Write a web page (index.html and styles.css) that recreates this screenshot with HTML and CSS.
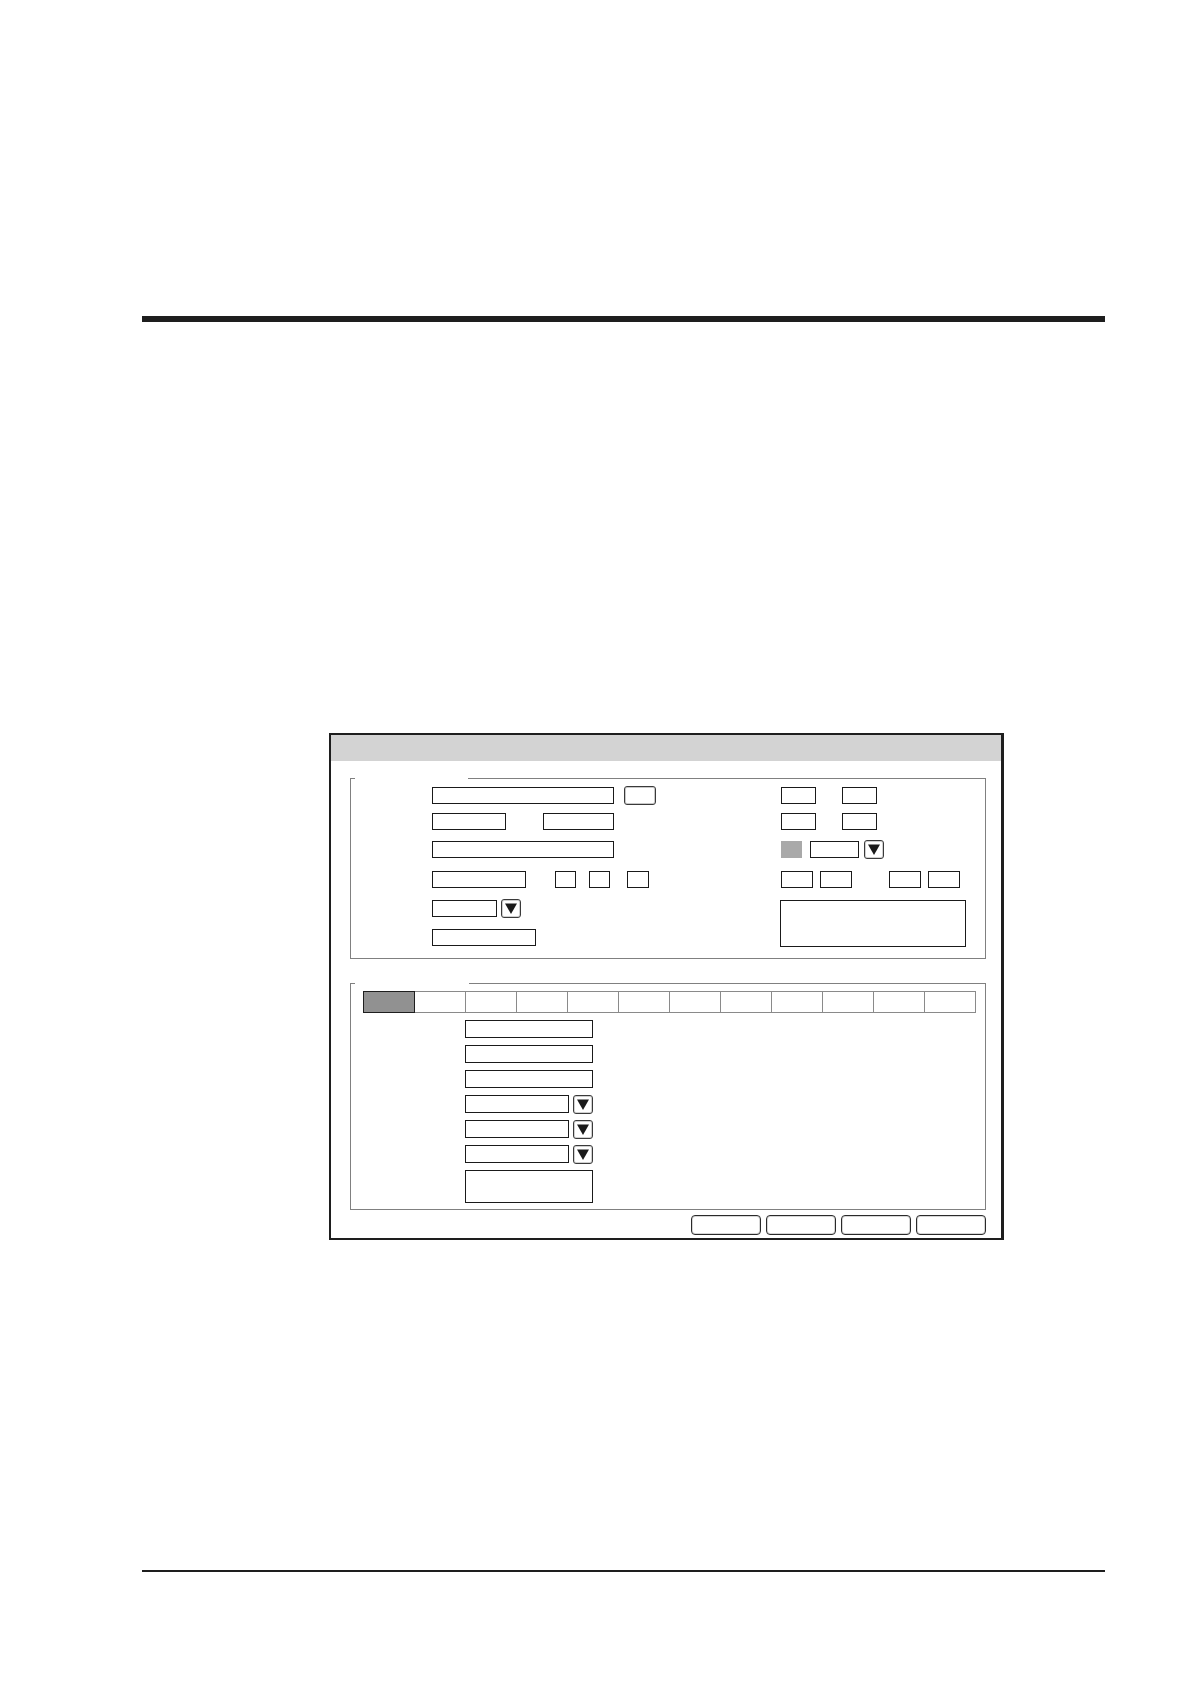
FILE: index.html
```html
<!DOCTYPE html>
<html lang="en">
<head>
<meta charset="utf-8">
<title>Dialog</title>
<link rel="stylesheet" href="styles.css">
</head>
<body>
<div class="page">
  <div class="rule-top"></div>

  <div class="window">
    <div class="titlebar"></div>
    <div class="content">

      <div class="group group-info">
        <div class="group-top"><span class="tick"></span><span class="legend"></span><span class="line"></span></div>
        <div class="info-grid">
          <div class="cell"><span class="field w182"></span><span class="btn-small ml10"></span></div>
          <div class="cell"><span class="field w35"></span><span class="field w35 ml26"></span></div>

          <div class="cell"><span class="field w74"></span><span class="field w71 ml37"></span></div>
          <div class="cell"><span class="field w35"></span><span class="field w35 ml26"></span></div>

          <div class="cell"><span class="field w182"></span></div>
          <div class="cell"><span class="swatch"></span><span class="field w49 ml8"></span><span class="dd ml5"><svg viewBox="0 0 20 19" width="20" height="19"><path d="M4 4.5 L16 4.5 L10 15 Z" fill="#1a1a1a"/></svg></span></div>

          <div class="cell"><span class="field w94"></span><span class="field w21 ml29"></span><span class="field w21 ml13"></span><span class="field w22 ml17"></span></div>
          <div class="cell"><span class="field w32"></span><span class="field w32 ml7"></span><span class="field w32 ml37"></span><span class="field w32 ml7"></span></div>

          <div class="cell"><span class="field w65"></span><span class="dd ml4"><svg viewBox="0 0 20 19" width="20" height="19"><path d="M4 4.5 L16 4.5 L10 15 Z" fill="#1a1a1a"/></svg></span></div>
          <div class="cell cell-memo"><span class="memo"></span></div>

          <div class="cell"><span class="field w104"></span></div>
        </div>
      </div>

      <div class="group group-detail">
        <div class="group-top"><span class="tick"></span><span class="legend"></span><span class="line"></span></div>
        <div class="detail-body">
          <div class="tabs">
            <span class="tab active"></span><span class="tab"></span><span class="tab"></span><span class="tab"></span>
            <span class="tab"></span><span class="tab"></span><span class="tab"></span><span class="tab"></span>
            <span class="tab"></span><span class="tab"></span><span class="tab"></span><span class="tab"></span>
          </div>
          <div class="detail-fields">
            <div class="drow"><span class="field tall w128"></span></div>
            <div class="drow"><span class="field tall w128"></span></div>
            <div class="drow"><span class="field tall w128"></span></div>
            <div class="drow"><span class="field tall w104"></span><span class="dd ml4"><svg viewBox="0 0 20 19" width="20" height="19"><path d="M4 4.5 L16 4.5 L10 15 Z" fill="#1a1a1a"/></svg></span></div>
            <div class="drow"><span class="field tall w104"></span><span class="dd ml4"><svg viewBox="0 0 20 19" width="20" height="19"><path d="M4 4.5 L16 4.5 L10 15 Z" fill="#1a1a1a"/></svg></span></div>
            <div class="drow"><span class="field tall w104"></span><span class="dd ml4"><svg viewBox="0 0 20 19" width="20" height="19"><path d="M4 4.5 L16 4.5 L10 15 Z" fill="#1a1a1a"/></svg></span></div>
            <div class="drow drow-notes"><span class="field notes w128"></span></div>
          </div>
        </div>
      </div>

      <div class="buttons">
        <span class="btn"></span><span class="btn"></span><span class="btn"></span><span class="btn"></span>
      </div>

    </div>
  </div>

  <div class="rule-bottom"></div>
</div>
</body>
</html>
```

FILE: styles.css
```css
* { box-sizing: border-box; }

html, body {
  margin: 0;
  padding: 0;
  background: #ffffff;
  font-family: "Liberation Sans", Arial, sans-serif;
}

.page {
  padding-top: 316px;
  padding-left: 142px;
}

.rule-top {
  width: 963px;
  height: 6px;
  background: #1e1e1e;
}

.rule-bottom {
  width: 963px;
  height: 2px;
  margin-top: 330px;
  background: #1e1e1e;
}

.window {
  margin-top: 411px;
  margin-left: 187px;
  width: 675px;
  border-style: solid;
  border-color: #1e1e1e;
  border-width: 2px 3px 2px 2px;
  background: #ffffff;
}

.titlebar {
  height: 26px;
  background: #d3d3d3;
}

.content {
  padding: 17px 15px 3px 19px;
}

/* group boxes */
.group {
  border: 1px solid #808080;
  border-top: none;
}

.group-top {
  display: flex;
  margin: 0 -1px;
  height: 1px;
}

.tick {
  width: 5px;
  border-top: 1px solid #808080;
}

.legend {
  width: 113px;
}

.group-detail .legend {
  width: 114px;
}

.line {
  flex: 1;
  border-top: 1px solid #808080;
}

.group-detail {
  margin-top: 24px;
}

/* info grid */
.info-grid {
  display: grid;
  grid-template-columns: 349px auto;
  grid-template-rows: 26px 28px 30px 29px 29px 17px;
  padding: 8px 0 12px 81px;
}

.cell {
  display: flex;
  align-items: center;
  align-self: start;
  height: 17px;
}

.cell-memo {
  grid-row: 5 / span 2;
  grid-column: 2;
  height: auto;
}

.field {
  display: block;
  height: 17px;
  border: 1px solid #1a1a1a;
  background: #ffffff;
  flex: none;
}

.field.tall { height: 18px; }
.field.notes { height: 33px; }

.memo {
  display: block;
  width: 186px;
  height: 47px;
  margin-left: -1px;
  border: 1px solid #1a1a1a;
}

.swatch {
  display: block;
  width: 21px;
  height: 17px;
  background: #a9a9a9;
  flex: none;
}

.btn-small {
  display: block;
  width: 32px;
  height: 19px;
  border: 1px solid #3a3a3a;
  border-radius: 3px;
  box-shadow: inset 0 0 0 1px #c8c8c8;
  flex: none;
}

.dd {
  display: block;
  width: 20px;
  height: 19px;
  border: 1px solid #3a3a3a;
  border-radius: 3px;
  box-shadow: inset 0 0 0 1px #d0d0d0;
  flex: none;
  position: relative;
  overflow: hidden;
}

.dd svg {
  position: absolute;
  left: -1px;
  top: -1px;
  display: block;
}

/* widths */
.w21 { width: 21px; }
.w22 { width: 22px; }
.w32 { width: 32px; }
.w35 { width: 35px; }
.w49 { width: 49px; }
.w65 { width: 65px; }
.w71 { width: 71px; }
.w74 { width: 74px; }
.w94 { width: 94px; }
.w104 { width: 104px; }
.w128 { width: 128px; }
.w182 { width: 182px; }

/* spacings */
.ml4 { margin-left: 4px; }
.ml5 { margin-left: 5px; }
.ml7 { margin-left: 7px; }
.ml8 { margin-left: 8px; }
.ml10 { margin-left: 10px; }
.ml13 { margin-left: 13px; }
.ml17 { margin-left: 17px; }
.ml26 { margin-left: 26px; }
.ml29 { margin-left: 29px; }
.ml37 { margin-left: 37px; }

/* detail group */
.detail-body {
  padding: 7px 0 6px 12px;
}

.tabs {
  display: flex;
  height: 22px;
}

.tab {
  display: block;
  width: 52px;
  height: 22px;
  border: 1px solid #8a8a8a;
  background: #ffffff;
  flex: none;
}

.tab + .tab { margin-left: -1px; }

.tab.active {
  background: #919191;
  border-color: #1e1e1e;
  position: relative;
  z-index: 1;
}

.detail-fields {
  display: flex;
  flex-direction: column;
  gap: 7px;
  margin-top: 7px;
  padding-left: 102px;
}

.drow {
  display: flex;
  align-items: center;
  height: 18px;
}

.drow-notes {
  height: 33px;
}

/* buttons */
.buttons {
  display: flex;
  justify-content: flex-end;
  gap: 5px;
  margin-top: 5px;
}

.btn {
  display: block;
  width: 70px;
  height: 20px;
  border: 1px solid #2a2a2a;
  border-radius: 4px;
  box-shadow: inset 0 0 0 1px #d6d6d6;
}
```
